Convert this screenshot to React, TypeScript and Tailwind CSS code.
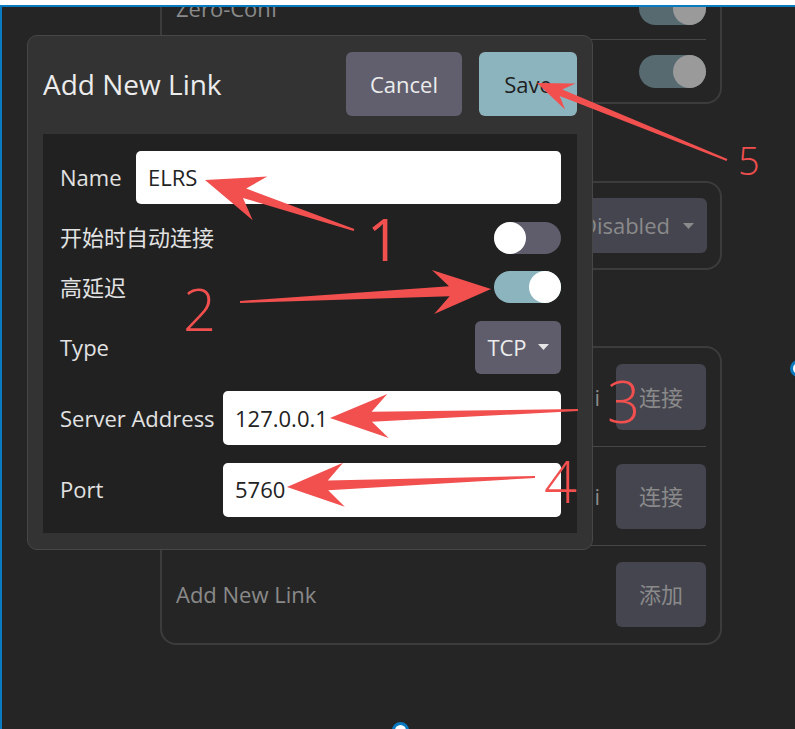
import React from "react";

type Pt = [number, number];
type Arrow = { tail: Pt; tip: Pt; head: number; half: number; neck: number };

// red annotation arrows, page coordinates
const arrows: Arrow[] = [
  { tail: [354, 230], tip: [205, 180], head: 58, half: 23, neck: 5 },
  { tail: [240, 302], tip: [491, 289], head: 58, half: 22, neck: 5 },
  { tail: [578, 410], tip: [330, 418], head: 58, half: 22, neck: 5 },
  { tail: [535, 477], tip: [287, 487], head: 57, half: 22, neck: 5 },
  { tail: [727, 160], tip: [537, 83], head: 36, half: 14, neck: 3.5 },
];

function arrowPoints(a: Arrow) {
  const [tx, ty] = a.tail;
  const [hx, hy] = a.tip;
  const len = Math.hypot(hx - tx, hy - ty);
  const ux = (hx - tx) / len;
  const uy = (hy - ty) / len;
  const nx = -uy;
  const ny = ux;
  const bx = hx - ux * a.head;
  const by = hy - uy * a.head;
  const kx = hx - ux * a.head * 0.72;
  const ky = hy - uy * a.head * 0.72;
  const pts = [
    [tx + nx, ty + ny],
    [kx + nx * a.neck, ky + ny * a.neck],
    [bx + nx * a.half, by + ny * a.half],
    [hx, hy],
    [bx - nx * a.half, by - ny * a.half],
    [kx - nx * a.neck, ky - ny * a.neck],
    [tx - nx, ty - ny],
  ];
  return pts.map((p) => p.map((v) => v.toFixed(1)).join(",")).join(" ");
}

function Toggle({ on }: { on: boolean }) {
  return (
    <div
      className={`flex h-[32px] w-[67px] rounded-full ${
        on ? "justify-end bg-[#8cb4be]" : "justify-start bg-[#5f5d6b]"
      }`}
    >
      <div className="h-[32px] w-[32px] rounded-full bg-white" />
    </div>
  );
}

function DimToggle() {
  return (
    <div className="flex h-[33px] w-[67px] justify-end rounded-full bg-[#566a70]">
      <div className="h-[33px] w-[33px] rounded-full bg-[#9a9a9a]" />
    </div>
  );
}

function Caret({ color }: { color: string }) {
  return (
    <svg width="11" height="6" viewBox="0 0 11 6">
      <path d="M0 0 L11 0 L5.5 6 Z" fill={color} />
    </svg>
  );
}

export default function App() {
  return (
    <div className="relative h-[729px] w-[795px] overflow-hidden bg-white pt-[5px] font-['Open_Sans','Noto_Sans_CJK_SC',sans-serif]">
      <div className="relative h-full overflow-hidden border-l-2 border-t-2 border-[#0b7bc1] bg-[#252525]">
        {/* Background settings panels */}
        <div className="flex flex-col pl-[158px] text-[22px] text-[#8a8a8a]">
          <div className="-mt-[32px] w-[562px] rounded-[16px] border-2 border-[#3c3c3c] px-[14px]">
            <div className="flex h-[63px] items-center justify-between border-b border-[#474747]">
              <span>Zero-Conf</span>
              <DimToggle />
            </div>
            <div className="flex h-[62px] items-center justify-between">
              <span>Auto Connect</span>
              <DimToggle />
            </div>
          </div>

          <div className="mt-[77px] flex w-[562px] justify-end rounded-[16px] border-2 border-[#3c3c3c] px-[13px] py-[15px]">
            <div className="flex h-[55px] w-[140px] items-center justify-end gap-[13px] rounded-[6px] bg-[#45454f] pr-[13px]">
              <span>Disabled</span>
              <Caret color="#8a8a8a" />
            </div>
          </div>

          <div className="mt-[76px] w-[562px] rounded-[16px] border-2 border-[#3c3c3c] px-[14px]">
            <div className="flex h-[99px] items-center border-b border-[#474747]">
              <span className="w-[424px] text-right">Serial Link i</span>
              <div className="ml-auto flex h-[66px] w-[90px] items-center justify-center rounded-[6px] bg-[#45454f]">
                连接
              </div>
            </div>
            <div className="flex h-[99px] items-center border-b border-[#474747]">
              <span className="w-[424px] text-right">UDP Link i</span>
              <div className="ml-auto flex h-[65px] w-[90px] items-center justify-center rounded-[6px] bg-[#45454f]">
                连接
              </div>
            </div>
            <div className="flex h-[97px] items-center">
              <span>Add New Link</span>
              <div className="ml-auto flex h-[65px] w-[90px] items-center justify-center rounded-[6px] bg-[#45454f]">
                添加
              </div>
            </div>
          </div>
        </div>

        {/* Add New Link dialog */}
        <div className="absolute left-[25px] top-[28px] w-[566px] rounded-[10px] border border-[#474747] bg-[#333333] px-[15px] pb-[16px] pt-[16px] text-[22px] text-[#e2e2e2]">
          <div className="flex h-[64px] items-center gap-[17px]">
            <span className="flex-1 text-[28px] text-[#ececec]">Add New Link</span>
            <div className="flex h-[64px] w-[116px] items-center justify-center rounded-[6px] bg-[#615f6e] text-[#ececec]">
              Cancel
            </div>
            <div className="flex h-[64px] w-[98px] items-center justify-center rounded-[6px] bg-[#8cb4be] text-[#1f1f1f]">
              Save
            </div>
          </div>

          <div className="mt-[18px] flex h-[399px] flex-col gap-[17.5px] bg-[#212121] pl-[17px] pr-[16px] pt-[17px]">
            <div className="flex h-[53px] items-center">
              <span>Name</span>
              <div className="ml-auto flex h-[53px] w-[425px] items-center rounded-[5px] bg-white pl-[12px] text-[#222222]">
                ELRS
              </div>
            </div>
            <div className="flex h-[32px] items-center justify-between">
              <span>开始时自动连接</span>
              <Toggle on={false} />
            </div>
            <div className="flex h-[32px] items-center justify-between">
              <span>高延迟</span>
              <Toggle on={true} />
            </div>
            <div className="flex h-[53px] items-center justify-between">
              <span>Type</span>
              <div className="flex h-[53px] w-[86px] items-center justify-center gap-[11px] rounded-[6px] bg-[#5f5d6b] text-[#ececec]">
                <span>TCP</span>
                <Caret color="#e6e6e6" />
              </div>
            </div>
            <div className="flex h-[54px] items-center">
              <span>Server Address</span>
              <div className="ml-auto flex h-[54px] w-[338px] items-center rounded-[5px] bg-white pl-[12px] text-[#222222]">
                127.0.0.1
              </div>
            </div>
            <div className="flex h-[54px] items-center">
              <span>Port</span>
              <div className="ml-auto flex h-[54px] w-[338px] items-center rounded-[5px] bg-white pl-[12px] text-[#222222]">
                5760
              </div>
            </div>
          </div>
        </div>

        {/* selection handles */}
        <div className="absolute left-[788px] top-[353px] h-[17px] w-[17px] rounded-full border-[3px] border-[#0b7bc1] bg-white" />
        <div className="absolute left-[390px] top-[715px] h-[17px] w-[17px] rounded-full border-[3px] border-[#0b7bc1] bg-white" />
      </div>

      {/* annotations */}
      <svg className="pointer-events-none absolute left-0 top-0" width="795" height="729">
        {arrows.map((a, i) => (
          <polygon key={i} points={arrowPoints(a)} fill="#f24f4f" />
        ))}
      </svg>
      <div className="pointer-events-none absolute left-[367px] top-[210px] text-[58px] leading-none text-[#f24f4f]">1</div>
      <div className="pointer-events-none absolute left-[183px] top-[280px] text-[58px] font-light leading-none text-[#f24f4f]">2</div>
      <div className="pointer-events-none absolute left-[607px] top-[372px] text-[58px] font-light leading-none text-[#f24f4f]">3</div>
      <div className="pointer-events-none absolute left-[544px] top-[452px] text-[58px] font-light leading-none text-[#f24f4f]">4</div>
      <div className="pointer-events-none absolute left-[738px] top-[141px] text-[38px] font-light leading-none text-[#f24f4f]">5</div>
    </div>
  );
}
